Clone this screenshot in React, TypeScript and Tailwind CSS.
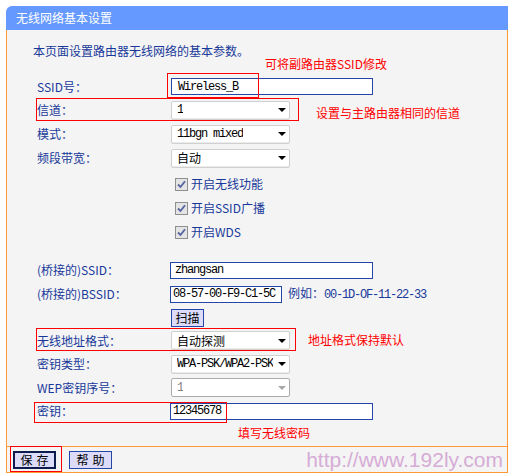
import React from 'react';

// 字体
const cnFont = "font-['Noto_Sans_CJK_SC',sans-serif]";
const monoFont = "font-['Liberation_Mono','Noto_Sans_CJK_SC',monospace] text-[12px] tracking-[-1.2px]";

function Arrow({ disabled }: { disabled?: boolean }) {
  return (
    <svg width="8" height="4" viewBox="0 0 8 4" className="shrink-0">
      <path d="M0 0H8L4 4Z" fill={disabled ? '#a8a8a8' : '#000'} />
    </svg>
  );
}

function FakeSelect({ value, mono, disabled }: { value: string; mono?: boolean; disabled?: boolean }) {
  return (
    <div
      className={`ml-[1px] w-[119px] h-[19px] flex items-center justify-between pl-[5px] pr-[3px] rounded-[2px] border bg-white overflow-hidden ${
        disabled ? 'border-[#ababab] text-[#808080]' : 'border-[#d0d0d0] text-black shadow-[inset_0_-1px_0_#ececec]'
      }`}
    >
      <span className={`whitespace-nowrap overflow-hidden ${mono ? monoFont : 'text-[12px]'}`}>{value}</span>
      <Arrow disabled={disabled} />
    </div>
  );
}

function TextInput({ value, width, pad = 'pl-[3px]' }: { value: string; width: string; pad?: string }) {
  return (
    <div className={`${width} h-[17px] border border-[#2346a8] bg-white flex items-center ${pad} overflow-hidden`}>
      <span className={`${monoFont} text-black whitespace-nowrap`}>{value}</span>
    </div>
  );
}

function Row({ label, h, children }: { label?: React.ReactNode; h: string; children?: React.ReactNode }) {
  return (
    <div className={`relative flex items-center ${h}`}>
      <span className="w-[163px] shrink-0 pl-[30px] text-[12px] text-[#18399a] whitespace-nowrap">{label}</span>
      {children}
    </div>
  );
}

function Check({ label, h }: { label: string; h: string }) {
  return (
    <div className={`flex items-center ${h} pl-[168px]`}>
      <span className="w-[13px] h-[13px] border border-[#8e8f8f] bg-[#e4e4e4] flex items-center justify-center">
        <svg width="9" height="9" viewBox="0 0 9 9">
          <path d="M1 4.5L3.5 7L8 1.2" stroke="#5264a0" strokeWidth="1.8" fill="none" />
        </svg>
      </span>
      <span className="ml-[3px] text-[12px] text-[#18399a]">{label}</span>
    </div>
  );
}

function RedBox({ cls }: { cls: string }) {
  return <span className={`absolute border border-[#ff0000] pointer-events-none ${cls}`} />;
}

function RedNote({ cls, text }: { cls: string; text: string }) {
  return <span className={`absolute text-[12px] leading-[16px] text-[#ff0000] whitespace-nowrap ${cls}`}>{text}</span>;
}

export default function App() {
  return (
    <div className={`w-[511px] h-[475px] bg-white pt-[6px] pl-[6px] ${cnFont}`}>
      <div className="w-[502px]">
        {/* 标题栏 */}
        <div className="h-[24px] bg-[#6699ff] rounded-tl-[6px] flex items-center pl-[10px] text-white text-[12px]">
          无线网络基本设置
        </div>

        {/* 主体 */}
        <div className="bg-[#f4f4f4] border-x border-b border-[#ff9933]">
          <div className="pt-[11px] pb-[3px]">
            <div className="h-[20px] flex items-center pl-[26px] text-[12px] text-[#18399a]">
              本页面设置路由器无线网络的基本参数。
            </div>

            <div className="mt-[14px]">
              <Row label="SSID号：" h="h-[23px]">
                <div className="ml-[1px]">
                  <TextInput value="Wireless_B" width="w-[202px]" pad="pl-[6px]" />
                </div>
                <RedBox cls="left-[160px] top-[-2px] w-[92px] h-[25px]" />
                <RedNote cls="left-[258px] top-[-19px]" text="可将副路由器SSID修改" />
              </Row>
              <Row label="信道：" h="h-[24px]">
                <FakeSelect value="1" mono />
                <RedBox cls="left-[29px] top-[0px] w-[263px] h-[23px]" />
                <RedNote cls="left-[309px] top-[7px]" text="设置与主路由器相同的信道" />
              </Row>
              <Row label="模式：" h="h-[24px]">
                <FakeSelect value="11bgn mixed" mono />
              </Row>
              <Row label="频段带宽：" h="h-[24px]">
                <FakeSelect value="自动" />
              </Row>

              <div className="mt-[2px]">
                <Check label="开启无线功能" h="h-[24px]" />
                <Check label="开启SSID广播" h="h-[24px]" />
                <Check label="开启WDS" h="h-[24px]" />
              </div>

              <div className="mt-[14px]">
                <Row label="(桥接的)SSID：" h="h-[24px]">
                  <TextInput value="zhangsan" width="w-[203px]" pad="pl-[4px]" />
                </Row>
                <Row label="(桥接的)BSSID：" h="h-[24px]">
                  <TextInput value="08-57-00-F9-C1-5C" width="w-[112px]" pad="pl-[2px]" />
                  <span className="ml-[6px] text-[12px] text-[#18399a] whitespace-nowrap">
                    例如：<span className={monoFont}>00-1D-OF-11-22-33</span>
                  </span>
                </Row>
                <Row h="h-[23px]">
                  <button className="ml-[1px] w-[33px] h-[18px] bg-[#dcdcfa] border border-[#2346a8] text-[12px] leading-none text-black flex items-center justify-center">
                    扫描
                  </button>
                </Row>
                <Row label="无线地址格式：" h="h-[23px]">
                  <FakeSelect value="自动探测" />
                  <RedBox cls="left-[29px] top-[-1px] w-[260px] h-[23px]" />
                  <RedNote cls="left-[301px] top-[3px]" text="地址格式保持默认" />
                </Row>
                <Row label="密钥类型：" h="h-[24px]">
                  <FakeSelect value="WPA-PSK/WPA2-PSK" mono />
                </Row>
                <Row label="WEP密钥序号：" h="h-[23px]">
                  <FakeSelect value="1" mono disabled />
                </Row>
                <Row label="密钥：" h="h-[24px]">
                  <TextInput value="12345678" width="w-[203px]" pad="pl-[2px]" />
                  <RedBox cls="left-[27px] top-[3px] w-[193px] h-[21px]" />
                </Row>
                <div className="h-[20px] flex items-center pl-[231px] text-[12px] text-[#ff0000]">填写无线密码</div>
              </div>
            </div>
          </div>

          {/* 按钮栏 */}
          <div className="relative border-t border-[#ff9933] h-[26px] flex items-center pl-[6px] pr-[4px]">
            <button className="w-[43px] h-[18px] bg-[#dcdcfa] border-2 border-[#0d1b4f] text-[12px] leading-none text-black flex items-center justify-center tracking-[4px] pl-[4px]">
              保存
            </button>
            <button className="ml-[13px] w-[43px] h-[18px] bg-[#dcdcfa] border border-[#2346a8] text-[12px] leading-none text-black flex items-center justify-center tracking-[4px] pl-[4px]">
              帮助
            </button>
            <RedBox cls="left-[3px] top-[-1px] w-[52px] h-[26px]" />
            <span className="ml-auto font-['Liberation_Sans',Arial,sans-serif] text-[21px] leading-none text-[#d6acd6]">
              http://www.192ly.com
            </span>
          </div>
        </div>
      </div>
    </div>
  );
}
